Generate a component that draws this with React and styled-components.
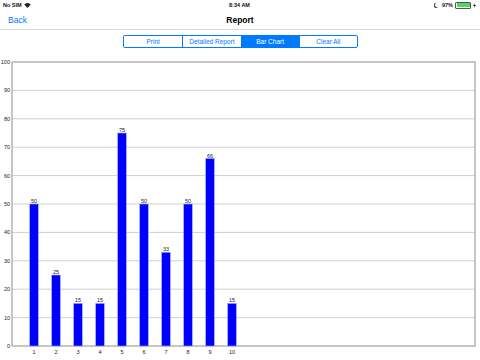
import { styled, createGlobalStyle } from "styled-components";

const GlobalStyle = createGlobalStyle`
  html, body {
    margin: 0;
    padding: 0;
    background: #fff;
    font-family: "Liberation Sans", Arial, sans-serif;
  }
`;

const values = [50, 25, 15, 15, 75, 50, 33, 50, 66, 15];
const tabs = ["Print", "Detailed Report", "Bar Chart", "Clear All"];

const Page = styled.div`
  width: 480px;
  height: 360px;
  display: flex;
  flex-direction: column;
  overflow: hidden;
`;

const StatusBar = styled.div`
  height: 10px;
  display: grid;
  grid-template-columns: 1fr auto 1fr;
  align-items: center;
  padding: 0 4px 0 3px;
  font-size: 5.5px;
  font-weight: bold;
  color: #111;
  .left {
    display: flex;
    align-items: center;
    gap: 2px;
  }
  .right {
    display: flex;
    align-items: center;
    justify-content: flex-end;
    gap: 2px;
  }
`;

const Battery = styled.div`
  width: 13px;
  height: 4px;
  border: 0.6px solid #555;
  border-radius: 1px;
  padding: 0.5px;
  display: flex;
  div {
    flex: 1;
    background: #4cd964;
  }
`;

const NavBar = styled.div`
  height: 19px;
  display: grid;
  grid-template-columns: 1fr auto 1fr;
  align-items: center;
  padding: 0 8px;
  border-bottom: 1px solid #dadada;
  a {
    color: #007aff;
    font-size: 8.5px;
    text-decoration: none;
  }
  h1 {
    margin: 0;
    font-size: 8.5px;
    font-weight: bold;
    color: #000;
  }
`;

const TabRow = styled.div`
  display: flex;
  justify-content: center;
  padding: 5px 0 0 1px;
`;

const Segmented = styled.div`
  display: flex;
  border: 1px solid #007aff;
  border-radius: 2px;
  overflow: hidden;
`;

const Segment = styled.button`
  width: 58.25px;
  height: 11px;
  padding: 0;
  border: none;
  border-left: ${(p) => (p.$first ? "none" : "1px solid #007aff")};
  background: ${(p) => (p.$active ? "#007aff" : "#fff")};
  color: ${(p) => (p.$active ? "#fff" : "#007aff")};
  font-family: "Liberation Sans", Arial, sans-serif;
  font-size: 6.5px;
`;

const ChartWrap = styled.div`
  flex: 1;
  padding-top: 7px;
`;

const Chart = () => {
  const left = 12;
  const right = 475;
  const top = 7;
  const bottom = 291;
  const h = bottom - top;
  const y = (v) => bottom - (v / 100) * h;
  return (
    <svg width="480" height="300" viewBox="0 0 480 300">
      {[10, 20, 30, 40, 50, 60, 70, 80, 90].map((v) => (
        <line key={v} x1={left} x2={right} y1={y(v)} y2={y(v)} stroke="#cfcfcf" strokeWidth="1" />
      ))}
      <rect x={left} y={top} width={right - left} height={h} fill="none" stroke="#a8a8a8" strokeWidth="1.3" />
      {[0, 10, 20, 30, 40, 50, 60, 70, 80, 90, 100].map((v) => (
        <text key={v} x={10} y={y(v) + 2} fontSize="5.5" textAnchor="end" fill="#222" fontFamily="Liberation Sans, Arial, sans-serif">
          {v}
        </text>
      ))}
      {values.map((v, i) => {
        const cx = left + 22 * (i + 1);
        return (
          <g key={i}>
            <rect x={cx - 4.3} y={y(v)} width={8.6} height={bottom - y(v)} fill="#0000ff" stroke="#9ea8ff" strokeWidth="0.6" />
            <text x={cx} y={y(v) - 1} fontSize="5.5" textAnchor="middle" fill="#222" fontFamily="Liberation Sans, Arial, sans-serif">
              {v}
            </text>
            <text x={cx} y={bottom + 7.5} fontSize="5.5" textAnchor="middle" fill="#222" fontFamily="Liberation Sans, Arial, sans-serif">
              {i + 1}
            </text>
          </g>
        );
      })}
    </svg>
  );
};

const App = () => {
  return (
    <Page>
      <GlobalStyle />
      <StatusBar>
        <div className="left">
          <span>No SIM</span>
          <svg width="7" height="5" viewBox="0 0 14 10">
            <path d="M7 10 L0.5 3 A9.5 9.5 0 0 1 13.5 3 Z" fill="#222" />
          </svg>
        </div>
        <span>8:34 AM</span>
        <div className="right">
          <svg width="4" height="5" viewBox="0 0 8 10">
            <path d="M5 0 A5 5 0 1 0 8 8 A4 4 0 0 1 5 0 Z" fill="#555" />
          </svg>
          <span style={{ marginLeft: 2 }}>97%</span>
          <Battery>
            <div />
          </Battery>
          <svg width="3" height="5" viewBox="0 0 6 10">
            <path d="M4 0 L0 6 H3 L2 10 L6 4 H3 Z" fill="#222" />
          </svg>
        </div>
      </StatusBar>
      <NavBar>
        <a href="#">Back</a>
        <h1>Report</h1>
        <span />
      </NavBar>
      <TabRow>
        <Segmented>
          {tabs.map((t, i) => (
            <Segment key={t} $first={i === 0} $active={t === "Bar Chart"}>
              {t}
            </Segment>
          ))}
        </Segmented>
      </TabRow>
      <ChartWrap>
        <Chart />
      </ChartWrap>
    </Page>
  );
};

export default App;
